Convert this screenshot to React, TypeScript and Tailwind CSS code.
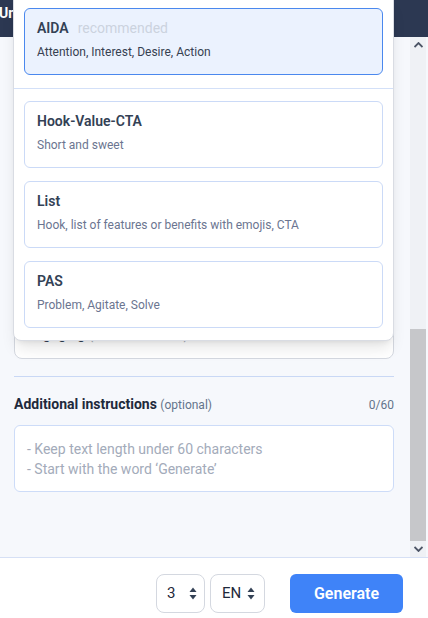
import React from 'react';

interface Framework {
  name: string;
  description: string;
  recommended?: boolean;
}

const FRAMEWORKS: Framework[] = [
  { name: 'AIDA', description: 'Attention, Interest, Desire, Action', recommended: true },
  { name: 'Hook-Value-CTA', description: 'Short and sweet' },
  { name: 'List', description: 'Hook, list of features or benefits with emojis, CTA' },
  { name: 'PAS', description: 'Problem, Agitate, Solve' },
];

const UpDown: React.FC = () => (
  <svg width="8" height="13" viewBox="0 0 8 13" className="shrink-0">
    <path d="M4 0.5 L7.5 5 L0.5 5 Z" fill="#334155" />
    <path d="M4 12.5 L7.5 8 L0.5 8 Z" fill="#334155" />
  </svg>
);

const FrameworkCard: React.FC<{ item: Framework; selected?: boolean }> = ({ item, selected }) => (
  <div
    className={
      selected
        ? 'h-[67px] rounded-md border border-[#4a88ee] bg-[#ebf2fe] px-3 pt-[9px]'
        : 'h-[67px] rounded-md border border-[#cbdaf7] bg-white px-3 pt-[9px]'
    }
  >
    <div className="flex items-baseline text-sm leading-5">
      <span className="font-semibold text-[#334155]">{item.name}</span>
      {item.recommended && <span className="ml-[9px] text-[#cbd3de]">recommended</span>}
    </div>
    <p className={selected ? 'mt-[6px] text-xs leading-4 text-[#374151]' : 'mt-[6px] text-xs leading-4 text-[#6b7590]'}>
      {item.description}
    </p>
  </div>
);

const App: React.FC = () => {
  return (
    <div className="relative h-[618px] w-[428px] overflow-hidden bg-[#f6f8fc] font-['Roboto','Liberation_Sans',sans-serif]">
      <header className="h-[37px] bg-[#2c3852] pt-[3px]">
        <h1 className="-ml-px text-sm font-bold leading-5 text-white">Untitled post</h1>
      </header>

      <div className="flex h-[520px]">
        <main className="flex-1 pl-[14px] pr-[16px] pt-[16px]">
          {/* fields hidden under the open framework menu */}
          <div className="h-5" />
          <div className="mt-2 h-[42px] rounded-lg border border-[#d4d8e0] bg-white" />
          <div className="mt-6 h-5" />
          <div className="mt-2 h-[90px] rounded-md border border-[#cddcf8] bg-white" />
          <div className="mt-6 h-5" />

          <div className="mt-2 flex h-[42px] items-start justify-between rounded-lg border border-[#d4d8e0] bg-white pl-3 pr-3 pt-[6px] text-sm leading-5 text-[#334155]">
            <span>
              Engaging <span className="text-[#9ca3af]">(recommended)</span>
            </span>
            <svg width="10" height="6" viewBox="0 0 10 6" className="mt-[10px]">
              <path d="M1 1 L5 5 L9 1" fill="none" stroke="#64748b" strokeWidth="1.5" />
            </svg>
          </div>

          <div className="mt-[17px] h-px bg-[#c9d8f5]" />

          <div className="mt-[17px] flex h-5 items-baseline justify-between">
            <div className="text-sm leading-5">
              <span className="font-bold text-[#1e293b]">Additional instructions</span>{' '}
              <span className="text-xs text-[#64748b]">(optional)</span>
            </div>
            <span className="text-xs text-[#64748b]">0/60</span>
          </div>

          <textarea
            className="mt-[11px] block h-[67px] w-full resize-none rounded-md border border-[#cddcf8] bg-white px-3 pt-[13px] text-sm leading-5 text-[#334155] outline-none placeholder:text-[#a3abba]"
            placeholder={'- Keep text length under 60 characters\n- Start with the word \u2018Generate\u2019'}
          />
        </main>

        <div className="mr-[2px] flex w-[16px] flex-col bg-[#eff1f5]">
          <div className="flex h-[15px] items-center justify-center">
            <svg width="9" height="6" viewBox="0 0 9 6">
              <path d="M0.5 5 L4.5 1 L8.5 5" fill="none" stroke="#4d5566" strokeWidth="1.8" />
            </svg>
          </div>
          <div className="flex-1" />
          <div className="h-[212px] bg-[#c6c7ca]" />
          <div className="flex h-[16px] items-center justify-center">
            <svg width="9" height="6" viewBox="0 0 9 6">
              <path d="M0.5 1 L4.5 5 L8.5 1" fill="none" stroke="#4d5566" strokeWidth="1.8" />
            </svg>
          </div>
        </div>
      </div>

      <footer className="flex h-[61px] items-start justify-end border-t border-[#d6e0f5] bg-white pr-[25px] pt-4">
        <button className="flex h-[39px] w-[49px] items-center justify-between rounded-lg border border-[#d4d8e0] bg-white pl-[10px] pr-[7px] text-[15px] text-[#1e293b]">
          <span>3</span>
          <UpDown />
        </button>
        <button className="ml-[5px] flex h-[39px] w-[55px] items-center justify-between rounded-lg border border-[#d4d8e0] bg-white pl-[11px] pr-[9px] text-[15px] text-[#1e293b]">
          <span>EN</span>
          <UpDown />
        </button>
        <button className="ml-[25px] h-[39px] w-[113px] rounded-md bg-[#3f83f8] text-base font-semibold text-white">
          Generate
        </button>
      </footer>

      <div className="absolute left-[13px] top-[-1px] w-[381px] rounded-b-lg border border-[#d9dce3] bg-white shadow-lg">
        <div className="px-[10px] pb-[13px] pt-2">
          <FrameworkCard item={FRAMEWORKS[0]} selected />
        </div>
        <div className="flex flex-col gap-[13px] border-t border-[#d3e0f8] px-[10px] pb-3 pt-3">
          {FRAMEWORKS.slice(1).map((f) => (
            <FrameworkCard key={f.name} item={f} />
          ))}
        </div>
      </div>
    </div>
  );
};

export default App;
